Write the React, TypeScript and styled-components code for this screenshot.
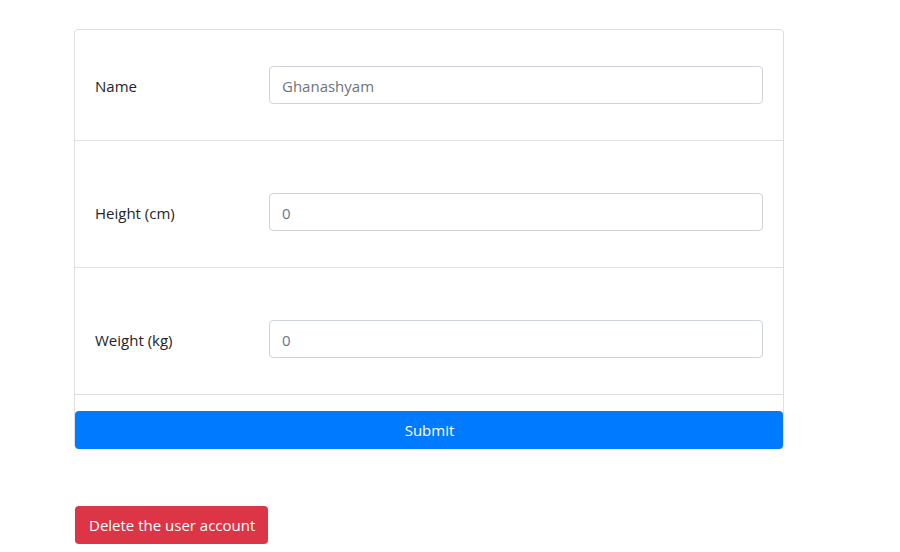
import React from "react";
import styled, { createGlobalStyle } from "styled-components";

const Global = createGlobalStyle`
  html, body { margin: 0; padding: 0; background: #fff; }
  body {
    font-family: "Open Sans", "Noto Sans", sans-serif;
    font-size: 15px;
    color: #212529;
  }
  * { box-sizing: border-box; }
`;

const Page = styled.div`
  padding: 29px 0 0 74px;
  width: 784px;
`;

const Card = styled.form`
  border: 1px solid #dfdfdf;
  border-radius: 4px;
  display: flex;
  flex-direction: column;
`;

const Row = styled.div<{ $first?: boolean }>`
  display: grid;
  grid-template-columns: 174px 1fr;
  align-items: center;
  padding: ${(p) => (p.$first ? "36px" : "52px")} 20px 36px 20px;
  border-bottom: 1px solid #dfdfdf;
`;

const Label = styled.label`
  font-size: 15px;
  color: #212529;
  padding-top: 2px;
`;

const Input = styled.input`
  height: 38px;
  border: 1px solid #ced4da;
  border-radius: 4px;
  padding: 2px 12px 0 12px;
  font-family: inherit;
  font-size: 15px;
  color: #6c757d;
  outline: none;
  width: 100%;
`;

const Spacer = styled.div`
  height: 16px;
`;

const Button = styled.button<{ $variant: "primary" | "danger"; $block?: boolean }>`
  height: 38px;
  border: none;
  border-radius: 4px;
  font-family: inherit;
  font-size: 15px;
  color: #fff;
  background: ${(p) => (p.$variant === "primary" ? "#007bff" : "#dc3545")};
  padding: 0 13px 0 14px;
  cursor: pointer;
  width: ${(p) => (p.$block ? "100%" : "auto")};
  margin: ${(p) => (p.$block ? "0 0 -1px 0" : "0")};
`;

const Footer = styled.div`
  margin-top: 57px;
  padding-left: 1px;
  display: flex;
`;

export default function App() {
  return (
    <>
      <Global />
      <Page>
        <Card onSubmit={(e) => e.preventDefault()}>
          <Row $first>
            <Label>Name</Label>
            <Input defaultValue="Ghanashyam" />
          </Row>
          <Row>
            <Label>Height (cm)</Label>
            <Input defaultValue="0" />
          </Row>
          <Row>
            <Label>Weight (kg)</Label>
            <Input defaultValue="0" />
          </Row>
          <Spacer />
          <Button $variant="primary" $block type="submit">Submit</Button>
        </Card>
        <Footer>
          <Button $variant="danger" type="button">Delete the user account</Button>
        </Footer>
      </Page>
    </>
  );
}
